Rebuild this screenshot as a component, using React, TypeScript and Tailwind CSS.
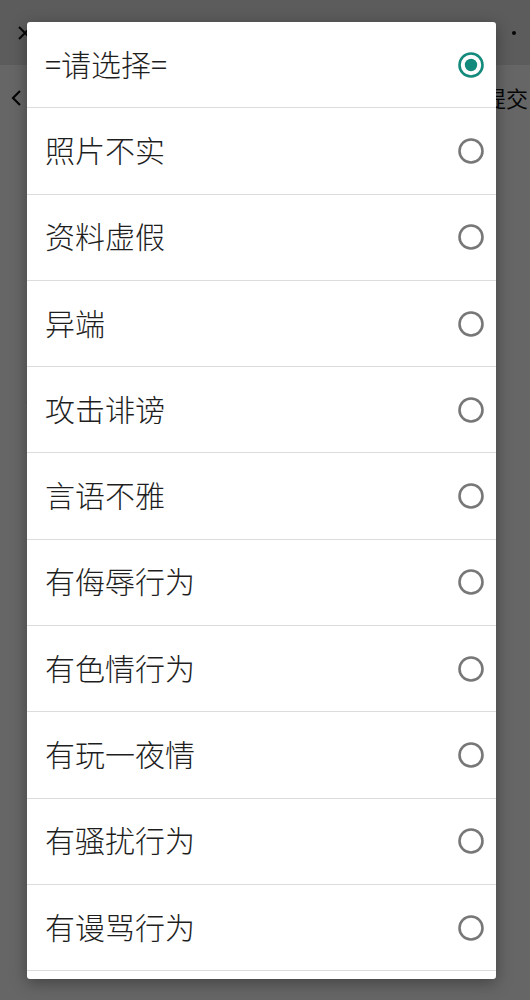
const reasons = [
  "=请选择=",
  "照片不实",
  "资料虚假",
  "异端",
  "攻击诽谤",
  "言语不雅",
  "有侮辱行为",
  "有色情行为",
  "有玩一夜情",
  "有骚扰行为",
  "有谩骂行为",
  "其他",
]

function Radio({ checked }: { checked: boolean }) {
  return (
    <svg width="30" height="30" viewBox="0 0 30 30">
      <circle
        cx="15"
        cy="15"
        r="11.5"
        fill="none"
        stroke={checked ? "#138a7b" : "#777777"}
        strokeWidth="2.6"
      />
      {checked && <circle cx="15" cy="15" r="6.2" fill="#138a7b" />}
    </svg>
  )
}

export default function App() {
  return (
    <div
      className="relative h-[1000px] w-[530px] overflow-hidden bg-white"
      style={{ fontFamily: '"Noto Sans CJK SC", "Noto Sans", sans-serif' }}
    >
      {/* page under the dialog */}
      <div className="flex h-[65px] items-center justify-between bg-[#e6e6e6] px-[14px]">
        <svg width="18" height="18" viewBox="0 0 18 18" className="ml-[2px]">
          <path d="M3 3l12 12M15 3L3 15" stroke="#111" strokeWidth="2" fill="none" />
        </svg>
        <div className="h-[4px] w-[4px] rounded-full bg-[#111]" />
      </div>
      <div className="flex h-[65px] items-center justify-between pl-[8px] pr-[2px]">
        <svg width="18" height="20" viewBox="0 0 18 20">
          <path d="M12 3L5 10l7 7" stroke="#111" strokeWidth="2.2" fill="none" />
        </svg>
        <span className="text-[22px] text-[#111]">提交</span>
      </div>
      <div className="mt-[258px] pl-[26px] text-[20px] leading-[28px] text-[#111]">举报原因</div>
      <div className="mt-[538px] pl-[30px] text-[20px] leading-[28px] text-[#111]">补充说明</div>

      {/* dim overlay */}
      <div className="absolute inset-0 bg-black/60" />

      {/* dialog */}
      <div className="absolute left-[27px] top-[22px] h-[957px] w-[469px] overflow-hidden rounded-[3px] bg-white shadow-[0_4px_16px_rgba(0,0,0,0.35)]">
        <div className="flex flex-col">
          {reasons.map((r, i) => (
            <div
              key={i}
              className="flex h-[86.3px] shrink-0 items-center justify-between border-b border-[#dcdcdc] pl-[18px] pr-[10px]"
            >
              <span className="pb-[4px] text-[30px] font-light leading-none text-[#1e1e1e]">{r}</span>
              <Radio checked={i === 0} />
            </div>
          ))}
        </div>
      </div>
    </div>
  )
}
